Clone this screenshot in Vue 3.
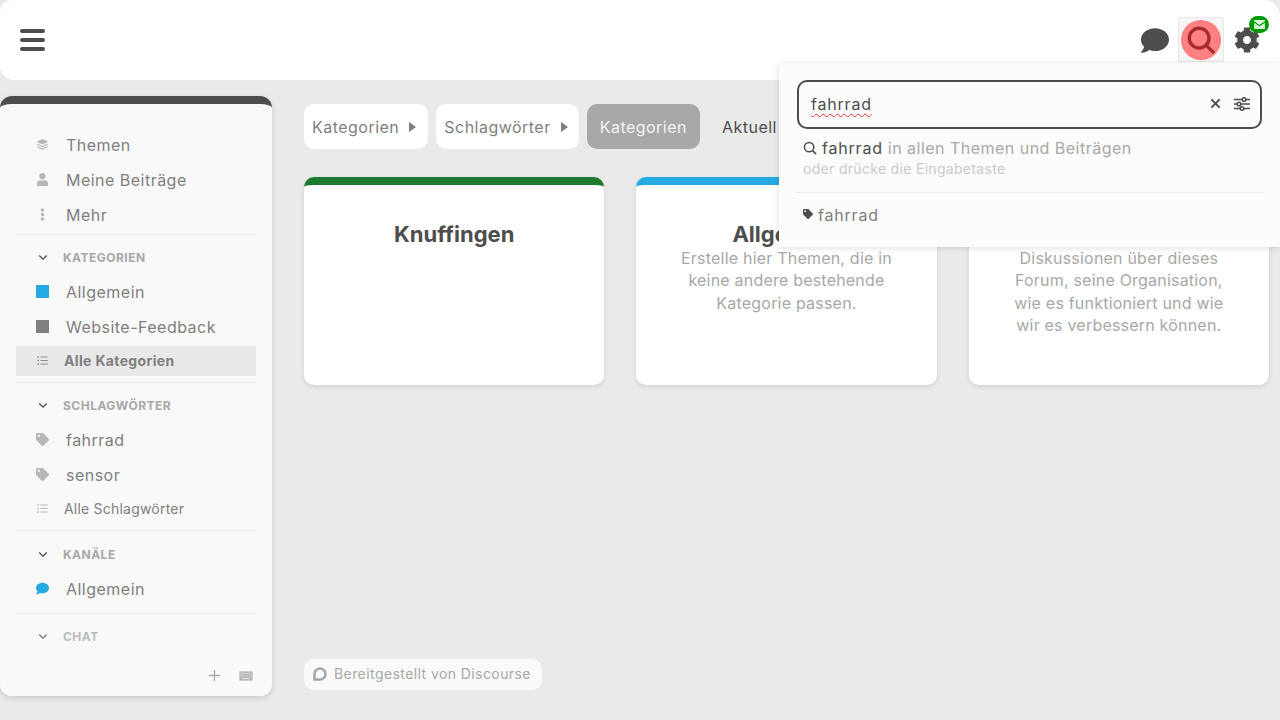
<script setup>
const icons = {
  layers: { box: '0 0 512 512', d: 'M256 40 486 150 256 260 26 150ZM76 226l180 86 180-86 50 24-230 110L26 250ZM76 326l180 86 180-86 50 24-230 110L26 350Z' },
  user: { box: '0 0 448 512', d: 'M224 256c70.7 0 128-57.3 128-128S294.7 0 224 0 96 57.3 96 128s57.3 128 128 128zm89.6 32h-16.7c-22.2 10.2-46.9 16-72.9 16s-50.6-5.8-72.9-16h-16.7C60.2 288 0 348.2 0 422.4V464c0 26.5 21.5 48 48 48h352c26.5 0 48-21.5 48-48v-41.6c0-74.2-60.2-134.4-134.4-134.4z' },
  dots: { box: '0 0 192 512', d: 'M96 184a72 72 0 1 0 0 144 72 72 0 0 0 0-144zM24 80a72 72 0 1 0 144 0 72 72 0 0 0-144 0zm0 352a72 72 0 1 0 144 0 72 72 0 0 0-144 0z' },
  list: { box: '0 0 512 512', d: 'M20 60h70v70H20zM20 221h70v70H20zM20 382h70v70H20zM160 72h340v46H160zM160 233h340v46H160zM160 394h340v46H160z' },
  tag: { box: '0 0 512 512', d: 'M0 252.118V48C0 21.49 21.49 0 48 0h204.118a48 48 0 0 1 33.941 14.059l211.882 211.882c18.745 18.745 18.745 49.137 0 67.882L293.823 497.941c-18.745 18.745-49.137 18.745-67.882 0L14.059 286.059A48 48 0 0 1 0 252.118zM112 64c-26.51 0-48 21.49-48 48s21.49 48 48 48 48-21.49 48-48-21.49-48-48-48z' },
  comment: { box: '0 0 512 512', d: 'M256 32C114.6 32 0 125.1 0 240c0 49.6 21.4 95 57 130.7C44.5 421.1 2.7 466 2.2 466.5c-2.2 2.3-2.8 5.7-1.5 8.7S4.8 480 8 480c66.3 0 116-31.8 140.6-51.4 32.7 12.3 69 19.4 107.4 19.4 141.4 0 256-93.1 256-208S397.4 32 256 32z' },
  cog: { box: '0 0 512 512', d: 'M487.4 315.7l-42.6-24.6c4.3-23.2 4.3-47 0-70.2l42.6-24.6c4.9-2.8 7.1-8.6 5.5-14-11.1-35.6-30-67.8-54.7-94.6-3.8-4.1-10-5.1-14.8-2.3L380.8 110c-17.9-15.4-38.5-27.3-60.8-35.1V25.8c0-5.6-3.9-10.5-9.4-11.7-36.7-8.2-74.3-7.8-109.2 0-5.5 1.2-9.4 6.1-9.4 11.7V75c-22.2 7.9-42.8 19.8-60.8 35.1L88.7 85.5c-4.9-2.8-11-1.9-14.8 2.3-24.7 26.7-43.6 58.9-54.7 94.6-1.7 5.4.6 11.2 5.5 14L67.3 221c-4.3 23.2-4.3 47 0 70.2l-42.6 24.6c-4.9 2.8-7.1 8.6-5.5 14 11.1 35.6 30 67.8 54.7 94.6 3.8 4.1 10 5.1 14.8 2.3l42.6-24.6c17.9 15.4 38.5 27.3 60.8 35.1v49.2c0 5.6 3.9 10.5 9.4 11.7 36.7 8.2 74.3 7.8 109.2 0 5.5-1.2 9.4-6.1 9.4-11.7v-49.2c22.2-7.9 42.8-19.8 60.8-35.1l42.6 24.6c4.9 2.8 11 1.9 14.8-2.3 24.7-26.7 43.6-58.9 54.7-94.6 1.5-5.5-.7-11.3-5.6-14.1zM256 336c-44.1 0-80-35.9-80-80s35.9-80 80-80 80 35.9 80 80-35.9 80-80 80z' }
}

const sections = [
  {
    rows: [
      { icon: 'layers', label: 'Themen' },
      { icon: 'user', label: 'Meine Beiträge' },
      { icon: 'dots', label: 'Mehr' }
    ]
  },
  {
    title: 'Kategorien',
    rows: [
      { square: '#25aae1', label: 'Allgemein' },
      { square: '#808080', label: 'Website-Feedback' },
      { icon: 'list', label: 'Alle Kategorien', small: true, active: true }
    ]
  },
  {
    title: 'Schlagwörter',
    rows: [
      { icon: 'tag', label: 'fahrrad' },
      { icon: 'tag', label: 'sensor' },
      { icon: 'list', label: 'Alle Schlagwörter', small: true }
    ]
  },
  {
    title: 'Kanäle',
    rows: [{ icon: 'comment', label: 'Allgemein', blue: true }]
  },
  { title: 'Chat', rows: [] }
]

const cards = [
  { title: 'Knuffingen', color: '#1e7a2e', text: '' },
  { title: 'Allgemein', color: '#25aae1', text: 'Erstelle hier Themen, die in keine andere bestehende Kategorie passen.' },
  { title: 'Website-Feedback', color: '#808080', text: 'Diskussionen über dieses Forum, seine Organisation, wie es funktioniert und wie wir es verbessern können.' }
]
</script>

<template>
  <div class="page">
    <header class="topbar">
      <button class="burger" aria-label="Menü"><span></span><span></span><span></span></button>
      <div class="top-icons">
        <svg class="chat-icon" :viewBox="icons.comment.box"><path :d="icons.comment.d" /></svg>
        <div class="search-btn">
          <div class="search-circle">
            <svg viewBox="0 0 32 32" class="search-glass">
              <circle cx="14" cy="14" r="10.5" />
              <path d="M21.5 21.5 30 30" />
            </svg>
          </div>
        </div>
        <div class="gear-wrap">
          <svg class="gear-icon" :viewBox="icons.cog.box"><path :d="icons.cog.d" /></svg>
          <span class="badge">
            <svg viewBox="0 0 12 10"><path d="M0 1.5 6 5.5 12 1.5V0H0ZM0 3V10H12V3L6 7Z" /></svg>
          </span>
        </div>
      </div>
    </header>

    <div class="body-row">
      <aside class="sidebar">
        <div class="side-scroll">
          <section v-for="(sec, i) in sections" :key="i" class="side-section">
            <div v-if="sec.title" class="side-head">
              <svg viewBox="0 0 12 8" class="chevron"><path d="M1.5 1.5 6 6l4.5-4.5" /></svg>
              <span>{{ sec.title }}</span>
            </div>
            <a
              v-for="row in sec.rows"
              :key="row.label"
              class="side-row"
              :class="{ small: row.small, active: row.active }"
            >
              <span v-if="row.square" class="square" :style="{ background: row.square }"></span>
              <svg v-else class="row-icon" :class="{ blue: row.blue }" :viewBox="icons[row.icon].box">
                <path :d="icons[row.icon].d" />
              </svg>
              <span>{{ row.label }}</span>
            </a>
          </section>
        </div>
        <div class="side-foot">
          <svg viewBox="0 0 14 14" class="plus"><path d="M7 1v12M1 7h12" /></svg>
          <svg viewBox="0 0 14 10" class="keys">
            <rect width="14" height="10" rx="1" />
            <path d="M1.5 2.500h11M1.500 5h11" stroke-dasharray="1 0.700" />
            <path d="M3.500 7.500h7" />
          </svg>
        </div>
      </aside>

      <main class="content">
        <nav class="nav-row">
          <button class="pill">Kategorien <i class="caret"></i></button>
          <button class="pill">Schlagwörter <i class="caret"></i></button>
          <button class="pill current">Kategorien</button>
          <a class="nav-link">Aktuell</a>
        </nav>
        <div class="cards">
          <article v-for="card in cards" :key="card.title" class="card" :style="{ borderTopColor: card.color }">
            <h3>{{ card.title }}</h3>
            <p>{{ card.text }}</p>
          </article>
        </div>
        <div class="powered">
          <svg viewBox="0 0 14 14"><path d="M7 1.500a5.500 5.500 0 0 1 0 11H1.500V7A5.500 5.500 0 0 1 7 1.500Z" /></svg>
          Bereitgestellt von Discourse
        </div>
      </main>
    </div>

    <div class="search-menu">
      <div class="search-input">
        <span class="typed">fahrrad</span>
        <svg viewBox="0 0 12 12" class="clear"><path d="M1.500 1.500 10.500 10.500M10.500 1.500 1.500 10.500" /></svg>
        <svg viewBox="0 0 16 14" class="sliders">
          <path d="M0 2.500h8M12 2.500h4M0 7h3M7 7h9M0 11.500h6M10 11.500h6" />
          <circle cx="10" cy="2.500" r="1.800" />
          <circle cx="5" cy="7" r="1.800" />
          <circle cx="8" cy="11.500" r="1.800" />
        </svg>
      </div>
      <div class="result-main">
        <svg viewBox="0 0 16 16" class="mini-glass"><circle cx="7" cy="7" r="5.300" /><path d="M11 11l4 4" /></svg>
        <b>fahrrad</b> <span>in allen Themen und Beiträgen</span>
      </div>
      <div class="result-hint">oder drücke die Eingabetaste</div>
      <div class="result-tag">
        <svg :viewBox="icons.tag.box"><path :d="icons.tag.d" /></svg>
        fahrrad
      </div>
    </div>
  </div>
</template>

<style>
body {
  margin: 0;
  background: #eaeaea;
}
</style>

<style scoped>
.page {
  position: relative;
  height: 720px;
  overflow: hidden;
  background: #eaeaea;
  font-family: Inter, "Noto Sans", sans-serif;
  letter-spacing: 0.03em;
  color: #7f7f7f;
}

.topbar {
  height: 80px;
  box-sizing: border-box;
  padding: 0 20px;
  display: flex;
  align-items: center;
  justify-content: space-between;
  background: #fff;
  border-radius: 12px 16px 14px 14px;
}

.burger {
  width: 25px;
  padding: 0;
  border: none;
  background: none;
  display: flex;
  flex-direction: column;
  gap: 5px;
}

.burger span {
  height: 4px;
  border-radius: 2px;
  background: #4d4d4d;
}

.top-icons {
  display: flex;
  align-items: center;
}

.chat-icon {
  width: 28px;
  height: 29px;
  fill: #4d4d4d;
  margin-right: 9px;
}

.search-btn {
  width: 46px;
  height: 45px;
  margin-top: -1px;
  box-sizing: border-box;
  border: 1px solid #e9e9e9;
  background: #f6f6f6;
  display: flex;
  align-items: center;
  justify-content: center;
}

.search-circle {
  width: 40px;
  height: 40px;
  flex: none;
  border-radius: 50%;
  background: #ff8080;
  display: flex;
  align-items: center;
  justify-content: center;
}

.search-glass {
  width: 30px;
  height: 30px;
  fill: none;
  stroke: #a82a2a;
  stroke-width: 3.600;
}

.gear-wrap {
  position: relative;
  margin-left: 10px;
  width: 26px;
  height: 26px;
}

.gear-icon {
  width: 26px;
  height: 26px;
  fill: #4d4d4d;
  display: block;
}

.badge {
  position: absolute;
  left: 15px;
  top: -11px;
  width: 20px;
  height: 17px;
  border-radius: 9px;
  background: #009900;
  display: flex;
  align-items: center;
  justify-content: center;
}

.badge svg {
  width: 11px;
  height: 9px;
  fill: #d9f5d9;
}

.body-row {
  display: flex;
  padding-top: 16px;
}

.sidebar {
  width: 272px;
  height: 600px;
  flex: none;
  box-sizing: border-box;
  background: #f9f9f9;
  border-top: 8px solid #4d4d4d;
  border-radius: 12px;
  box-shadow: 0 2px 6px rgba(0, 0, 0, 0.14);
  display: flex;
  flex-direction: column;
  overflow: hidden;
}

.side-scroll {
  flex: 1;
  min-height: 0;
  padding-top: 23px;
  overflow: hidden;
}

.side-section {
  margin: 0 16px;
  padding-bottom: 6px;
  border-bottom: 1px solid #ebebeb;
}

.side-section:first-child {
  padding-bottom: 2px;
}

.side-section:nth-child(4) {
  padding-bottom: 7px;
}

.side-section:last-child {
  border-bottom: none;
  opacity: 0.75;
}

.side-head {
  height: 30px;
  margin-top: 7px;
  margin-bottom: 2px;
  display: flex;
  align-items: center;
  gap: 15px;
  padding-left: 22px;
  font-size: 12px;
  font-weight: 700;
  letter-spacing: 0.04em;
  text-transform: uppercase;
  color: #a8a8a8;
}

.side-section:nth-child(4) .side-head {
  margin-top: 8px;
}

.chevron {
  width: 10px;
  height: 7px;
  flex: none;
  fill: none;
  stroke: #4d4d4d;
  stroke-width: 1.600;
}

.side-row {
  height: 35px;
  display: flex;
  align-items: center;
  padding-left: 20px;
  font-size: 16px;
  color: #7f7f7f;
}

.side-row .row-icon {
  width: 13px;
  height: 13px;
  flex: none;
  margin-right: 17px;
  fill: #b8b8b8;
}

.side-row .row-icon.blue {
  fill: #25aae1;
}

.square {
  width: 13px;
  height: 13px;
  flex: none;
  margin-right: 17px;
}

.side-row.small {
  height: 30px;
  box-sizing: border-box;
  margin-top: 2px;
  padding-bottom: 2px;
  font-size: 14px;
  letter-spacing: 0.015em;
}

.side-row.small .row-icon {
  margin-left: 1px;
  width: 11px;
  height: 11px;
  margin-right: 16px;
}

.side-row.active {
  background: #e9e9e9;
  font-weight: 700;
  letter-spacing: 0.025em;
}

.side-row.active .row-icon {
  fill: #8f8f8f;
}

.side-foot {
  height: 41px;
  flex: none;
  box-sizing: border-box;
  padding: 0 19px 0 0;
  display: flex;
  align-items: center;
  justify-content: flex-end;
  gap: 18px;
  background: #fafafa;
}

.plus {
  width: 13px;
  height: 13px;
  fill: none;
  stroke: #aaa;
  stroke-width: 1.400;
}

.keys {
  width: 14px;
  height: 10px;
  fill: #b8b8b8;
  stroke: #f0f0f0;
  stroke-width: 0.800;
}

.content {
  flex: 1;
  min-width: 0;
  padding: 8px 11px 0 32px;
  display: flex;
  flex-direction: column;
}

.nav-row {
  display: flex;
  align-items: center;
  gap: 8px;
  height: 45px;
}

.pill {
  height: 45px;
  padding: 0 12px 0 8px;
  border: none;
  border-radius: 10px;
  background: #fff;
  color: #7f7f7f;
  font: inherit;
  font-size: 16px;
  letter-spacing: 0.03em;
  display: flex;
  align-items: center;
  gap: 10px;
}

.pill + .pill {
  padding-right: 11px;
}

.pill.current {
  background: #a8a8a8;
  color: #f4f4f4;
  padding: 0 13px;
}

.caret {
  width: 0;
  height: 0;
  border-left: 7px solid #7f7f7f;
  border-top: 5px solid transparent;
  border-bottom: 5px solid transparent;
}

.nav-link {
  margin-left: 14px;
  font-size: 16px;
  color: #4d4d4d;
}

.cards {
  display: flex;
  gap: 32px;
  margin-top: 28px;
}

.card {
  flex: 1;
  height: 208px;
  box-sizing: border-box;
  padding: 0 40px;
  background: #fff;
  border-top: 8px solid;
  border-radius: 10px;
  box-shadow: 0 2px 5px rgba(0, 0, 0, 0.1);
  text-align: center;
}

.card h3 {
  margin: 36px 0 0;
  font-size: 22px;
  line-height: 26px;
  font-weight: 700;
  color: #4d4d4d;
  letter-spacing: 0;
}

.card p {
  margin: 0;
  font-size: 16px;
  line-height: 22.400px;
  letter-spacing: 0.013em;
  color: #a8a8a8;
}

.powered {
  align-self: flex-start;
  margin-top: 274px;
  height: 31px;
  box-sizing: border-box;
  padding: 0 11px 2px 9px;
  display: flex;
  align-items: center;
  gap: 7px;
  background: #fafafa;
  border-radius: 10px;
  font-size: 14px;
  letter-spacing: 0.03em;
  color: #a8a8a8;
}

.powered svg {
  width: 14px;
  height: 14px;
  fill: none;
  stroke: #a8a8a8;
  stroke-width: 2.600;
}

.search-menu {
  position: absolute;
  top: 63px;
  left: 779px;
  width: 501px;
  height: 184px;
  box-sizing: border-box;
  padding: 17px 18px 0;
  background: #fcfcfc;
  box-shadow: 0 1px 6px rgba(0, 0, 0, 0.14);
}

.search-input {
  height: 49px;
  box-sizing: border-box;
  padding: 0 10px 2px 12px;
  border: 2px solid #4d4d4d;
  border-radius: 10px;
  display: flex;
  align-items: center;
  font-size: 16px;
  color: #4d4d4d;
}

.typed {
  flex: 1;
  letter-spacing: 0.05em;
  text-decoration: underline wavy #e33;
  text-decoration-thickness: 1px;
  text-underline-offset: 3px;
  text-decoration-skip-ink: none;
}

.clear {
  width: 11px;
  height: 11px;
  margin-right: 13px;
  fill: none;
  stroke: #4d4d4d;
  stroke-width: 2.200;
}

.sliders {
  width: 16px;
  height: 14px;
  fill: none;
  stroke: #4d4d4d;
  stroke-width: 1.500;
}

.result-main {
  margin: 8px 0 0 6px;
  height: 22px;
  display: flex;
  align-items: center;
  gap: 5px;
  font-size: 16px;
  color: #a8a8a8;
}

.result-main b {
  font-weight: 400;
  letter-spacing: 0.05em;
  color: #4d4d4d;
}

.mini-glass {
  width: 14px;
  height: 14px;
  fill: none;
  stroke: #4d4d4d;
  stroke-width: 1.800;
}

.result-hint {
  margin: 0 0 0 6px;
  height: 33px;
  line-height: 19px;
  font-size: 14px;
  letter-spacing: 0.022em;
  color: #c9c9c9;
}

.result-tag {
  margin: 0 -2px;
  padding: 11px 0 0 8px;
  border-top: 1px solid #ececec;
  display: flex;
  align-items: center;
  gap: 5px;
  height: 22px;
  font-size: 16px;
  letter-spacing: 0.05em;
  color: #7f7f7f;
}

.result-tag svg {
  width: 10px;
  height: 10px;
  margin-top: -3px;
  fill: #4d4d4d;
}
</style>
